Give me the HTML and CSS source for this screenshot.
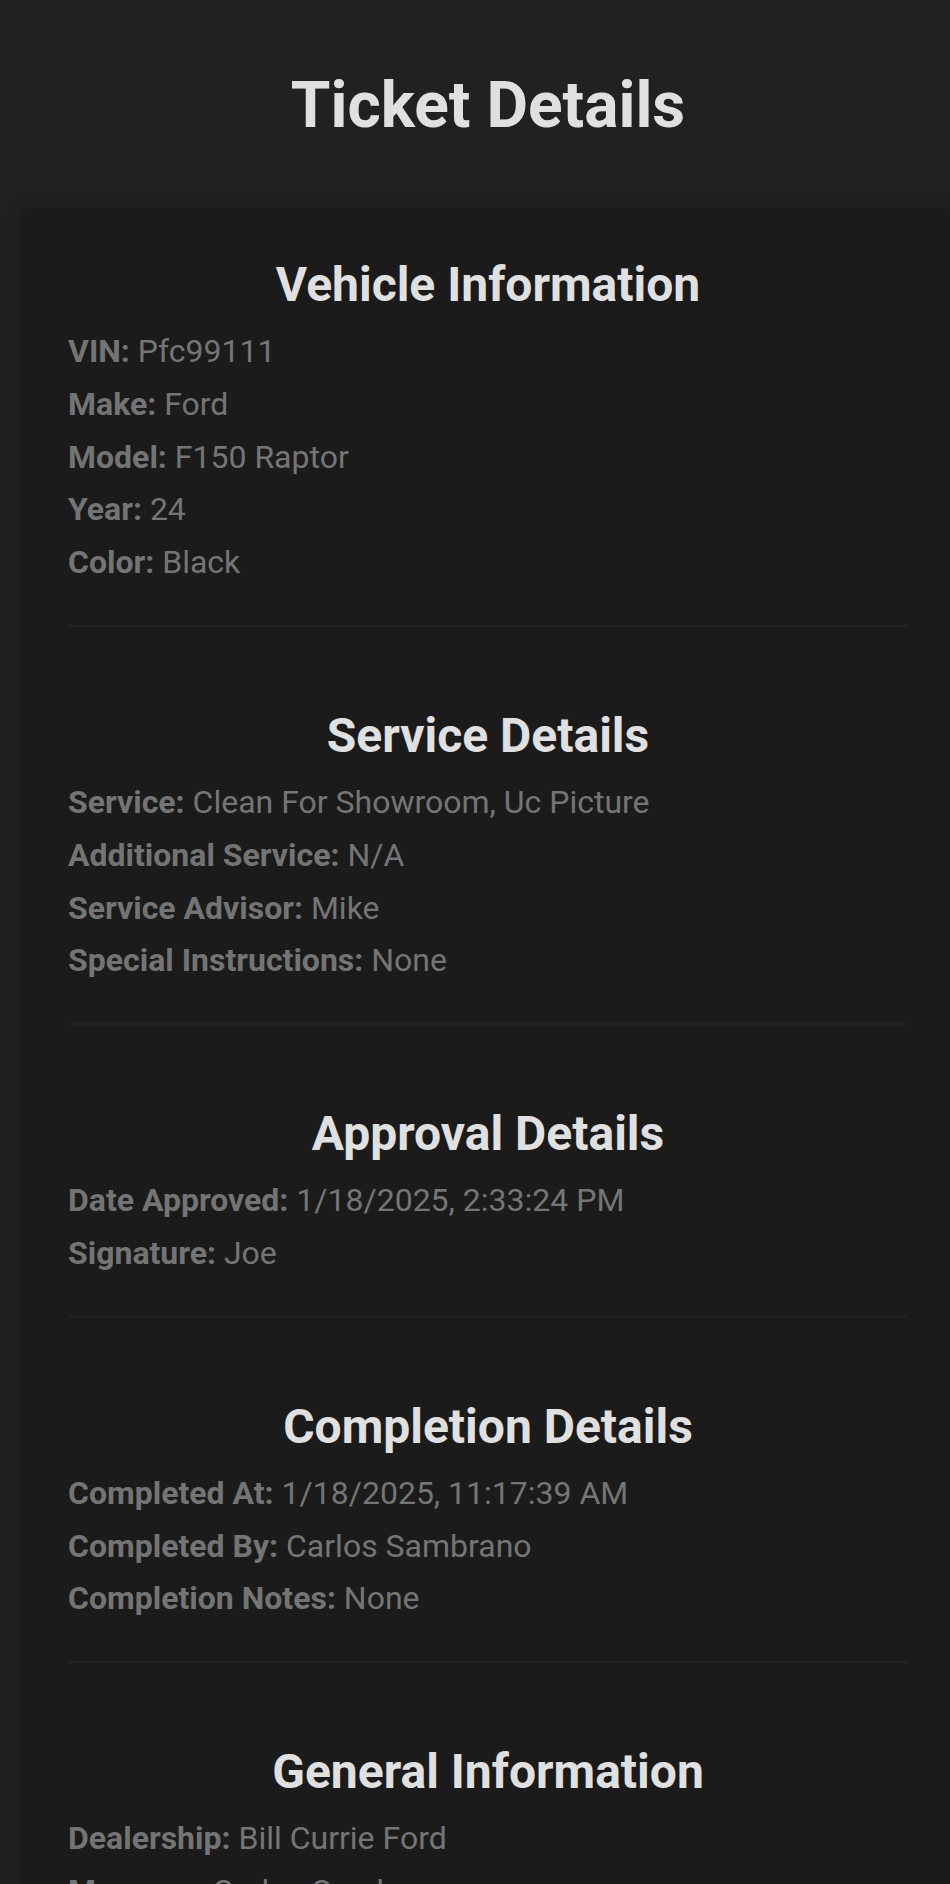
FILE: index.html
```html
<!DOCTYPE html>
<html lang="en">
<head>
<meta charset="utf-8">
<title>Ticket Details</title>
<link rel="stylesheet" href="styles.css">
</head>
<body>
<div class="page">
  <h1 class="page-title">Ticket Details</h1>
  <div class="card">
    <section class="section">
      <h2 class="section-title">Vehicle Information</h2>
      <div class="rows">
        <p class="row"><strong>VIN:</strong> Pfc99111</p>
        <p class="row"><strong>Make:</strong> Ford</p>
        <p class="row"><strong>Model:</strong> F150 Raptor</p>
        <p class="row"><strong>Year:</strong> 24</p>
        <p class="row"><strong>Color:</strong> Black</p>
      </div>
    </section>
    <section class="section">
      <h2 class="section-title">Service Details</h2>
      <div class="rows">
        <p class="row"><strong>Service:</strong> Clean For Showroom, Uc Picture</p>
        <p class="row"><strong>Additional Service:</strong> N/A</p>
        <p class="row"><strong>Service Advisor:</strong> Mike</p>
        <p class="row"><strong>Special Instructions:</strong> None</p>
      </div>
    </section>
    <section class="section">
      <h2 class="section-title">Approval Details</h2>
      <div class="rows">
        <p class="row"><strong>Date Approved:</strong> 1/18/2025, 2:33:24 PM</p>
        <p class="row"><strong>Signature:</strong> Joe</p>
      </div>
    </section>
    <section class="section">
      <h2 class="section-title">Completion Details</h2>
      <div class="rows">
        <p class="row"><strong>Completed At:</strong> 1/18/2025, 11:17:39 AM</p>
        <p class="row"><strong>Completed By:</strong> Carlos Sambrano</p>
        <p class="row"><strong>Completion Notes:</strong> None</p>
      </div>
    </section>
    <section class="section">
      <h2 class="section-title">General Information</h2>
      <div class="rows">
        <p class="row"><strong>Dealership:</strong> Bill Currie Ford</p>
        <p class="row"><strong>Manager:</strong> Carlos Sambrano</p>
        <p class="row"><strong>Status:</strong> Completed</p>
      </div>
    </section>
  </div>
</div>
</body>
</html>
```

FILE: styles.css
```css
html {
  overflow-x: hidden;
}
body {
  margin: 0;
  background: #212121;
  font-family: Roboto, "Noto Sans", sans-serif;
  color: #757575;
}
.page {
  width: 936px;
  margin-left: 20px;
}
.page-title {
  margin: 68px 0 65px;
  font-size: 64px;
  font-weight: 700;
  color: #e0e0e0;
  text-align: center;
  line-height: normal;
}
.card {
  background: #1b1b1b;
  border-radius: 12px;
  padding: 48px 48px 48px;
  box-shadow: 0 0 20px rgba(0, 0, 0, 0.25);
}
.section {
  padding-bottom: 44px;
  border-bottom: 2px solid #232323;
}
.section + .section {
  margin-top: 80px;
}
.section-title {
  margin: 0 0 20px;
  font-size: 48px;
  font-weight: 700;
  color: #e0e0e0;
  text-align: center;
  line-height: normal;
}
.rows {
  display: flex;
  flex-direction: column;
  gap: 16px;
}
.row {
  margin: 0;
  font-size: 32px;
  line-height: 36.8px;
  color: #757575;
}
.row strong {
  font-weight: 700;
  color: #747474;
}
```
